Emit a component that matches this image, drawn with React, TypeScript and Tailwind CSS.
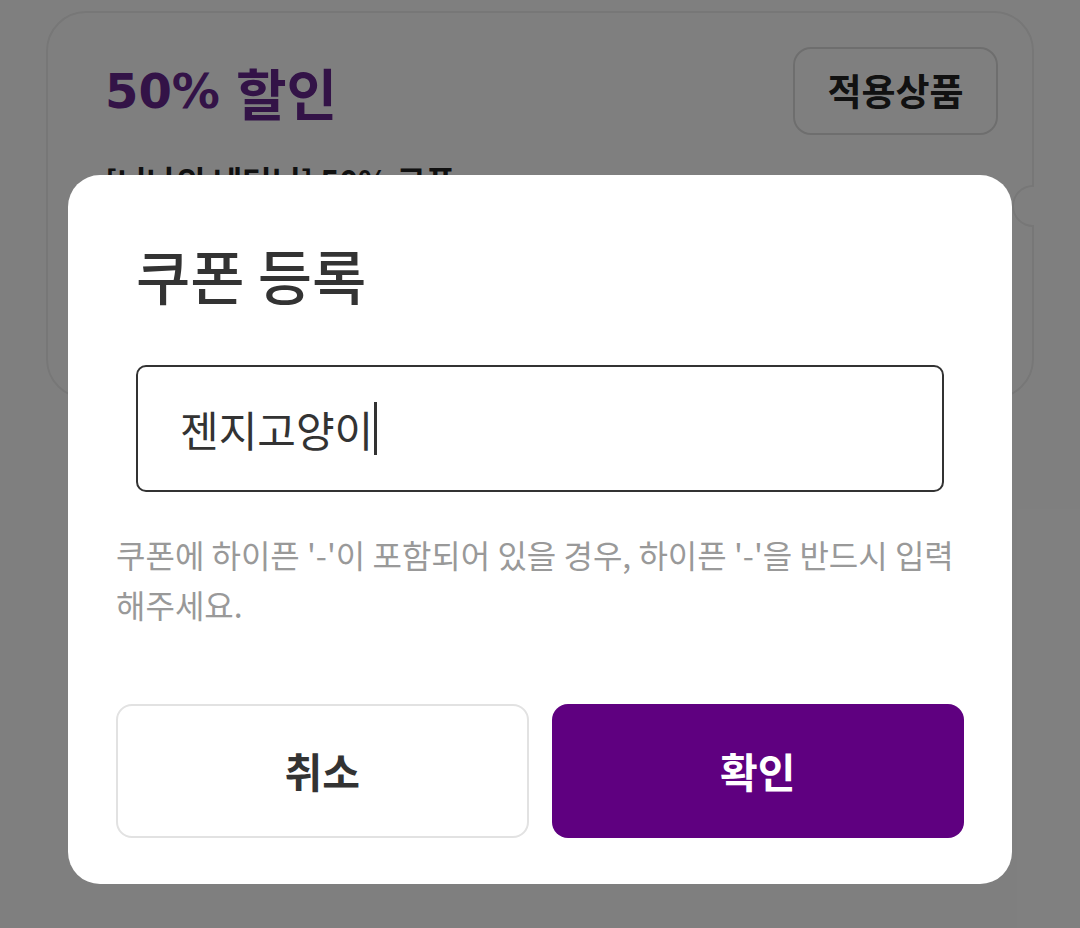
import React from "react";

const font = { fontFamily: '"Noto Sans CJK KR", "Noto Sans", sans-serif' };
const digitFont = { fontFamily: '"DejaVu Sans", "Noto Sans CJK KR", sans-serif' };

export default function App() {
  return (
    <div
      className="relative w-[1080px] h-[928px] overflow-hidden bg-white"
      style={font}
    >
      {/* background page */}
      <div className="pt-[11px] pl-[46px]">
        <div className="relative w-[988px] h-[388px] rounded-[40px] border-2 border-[#eeeeee] pl-[57px] pr-[34px] pt-[34px]">
          <div className="flex items-center justify-between h-[88px]">
            <div className="h-[88px] flex items-center font-bold text-[#66268f] whitespace-nowrap">
              <span className="text-[48px] leading-[60px]" style={digitFont}>
                50%
              </span>
              <span className="text-[55px] leading-[70px] ml-[16px]">할인</span>
            </div>
            <div className="w-[205px] h-[88px] rounded-[18px] border-2 border-[#dddddd] flex items-center justify-center text-[37px] font-bold text-[#222]">
              적용상품
            </div>
          </div>
          <div className="mt-[22px] text-[32px] leading-[46px] font-bold text-[#222]">
            [너나의 네터님] 50% 쿠폰
          </div>
          <div className="absolute right-[-2px] top-[172px] w-[22px] h-[42px] rounded-l-full border-2 border-r-0 border-[#eeeeee] bg-white" />
        </div>
      </div>

      {/* overlay */}
      <div className="absolute inset-0 bg-black/50 flex justify-center items-start pt-[175px]">
        <div className="w-[944px] h-[709px] rounded-[32px] bg-white px-[48px] pt-[62px] pb-[46px] flex flex-col">
          <div className="px-[20px]">
            <div className="text-[59px] leading-[76px] font-medium text-[#333]">
              쿠폰 등록
            </div>
            <div className="mt-[52px] h-[127px] rounded-[10px] border-2 border-[#333] flex items-center pl-[42px]">
              <span className="text-[42px] leading-[56px] text-[#333]">젠지고양이</span>
              <span className="ml-[1px] w-[3px] h-[53px] bg-[#333]" />
            </div>
          </div>
          <div className="mt-[37px] text-[32px] leading-[50px] text-[#999] whitespace-nowrap">
            쿠폰에 하이픈 '-'이 포함되어 있을 경우, 하이픈 '-'을 반드시 입력
            <br />
            해주세요.
          </div>
          <div className="mt-auto grid grid-cols-2 gap-[23px]">
            <button className="h-[134px] rounded-[16px] border-2 border-[#e2e2e2] bg-white text-[41px] font-bold text-[#333] flex items-center justify-center">
              취소
            </button>
            <button className="h-[134px] rounded-[16px] bg-[#5f0080] text-[41px] font-bold text-white flex items-center justify-center">
              확인
            </button>
          </div>
        </div>
      </div>
    </div>
  );
}
